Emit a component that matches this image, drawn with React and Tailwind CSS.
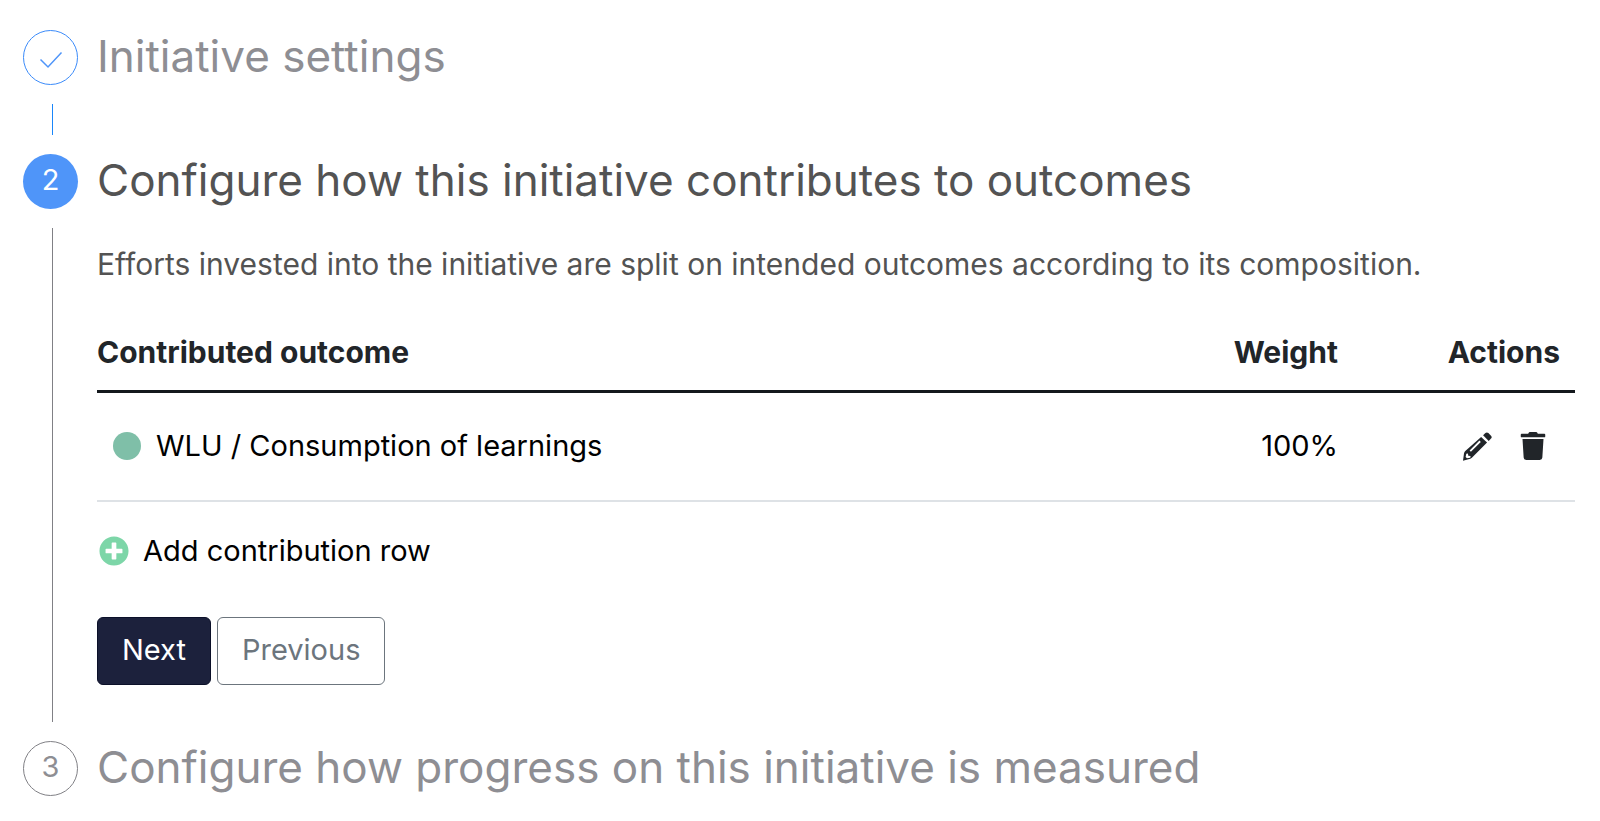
import { FaPlusCircle, FaTrash } from "react-icons/fa";

const contributions = [
  { id: 1, outcome: "WLU / Consumption of learnings", weight: 100 },
];

const badgeStyles = {
  done: "border border-[#3b8bfa] text-[#4f95f9]",
  active: "bg-[#4f95f9] text-white",
  waiting: "border border-[#808085] text-[#8e8e93]",
};

const PencilIcon = () => (
  <svg width="29" height="29" viewBox="0 0 88 88" fill="currentColor">
    <path d="M61 10L68 3Q72 0 77 3L85 11Q89 16 85 20L78 27Z" />
    <path
      fillRule="evenodd"
      d="M55 15L73 32L27 78Q25 80 22 81L0 87L3 65Q4 61 7 58ZM50 26L20 56L24 60L54 30ZM10 66L8 76L12 80L22 78L23 73L16 72L15 65Z"
    />
  </svg>
);

const Step = ({ number, status, title, children, last }) => (
  <li className="flex gap-[19px]">
    {/* Badge and connecting line */}
    <div className="flex w-[55px] shrink-0 flex-col">
      <div
        className={`flex h-[55px] w-[55px] items-center justify-center rounded-full pb-1 text-[29px] leading-9 ${badgeStyles[status]}`}
      >
        {status === "done" ? (
          <svg className="mt-2" width="24" height="18" viewBox="0 0 24 18" fill="none" stroke="currentColor" strokeWidth="1.5">
            <path d="M1.5 8.5L9 16L22.500 1.500" />
          </svg>
        ) : (
          number
        )}
      </div>
      {!last && (
        <div className={`my-[19px] ml-[29px] w-px flex-1 ${status === "done" ? "bg-[#1a86fa]" : "bg-[#808085]"}`}></div>
      )}
    </div>

    <div className={`min-w-0 flex-1 ${last ? "" : "pb-14"}`}>
      <h2 className={`text-[44px] leading-[52px] ${status === "active" ? "text-[#535353]" : "text-[#8e8e93]"}`}>
        {title}
      </h2>
      {children}
    </div>
  </li>
);

const ContributionTable = () => (
  <table className="mt-[52px] w-full text-[29px] leading-9">
    <thead>
      <tr className="border-b-[3px] border-[#14181d] text-[30px] text-[#212529]">
        <th className="pb-5 text-left font-bold">Contributed outcome</th>
        <th className="pb-5 text-right font-bold">Weight</th>
        <th className="w-[237px] pr-[15px] pb-5 text-right font-bold">Actions</th>
      </tr>
    </thead>
    <tbody>
      {contributions.map((row) => (
        <tr key={row.id} className="border-b-2 border-[#dee2e6] text-black">
          <td className="pt-[35px] pb-9 pl-4">
            <div className="flex items-center gap-[15px]">
              <span className="h-7 w-7 rounded-full bg-[#7fbfa8]"></span>
              {row.outcome}
            </div>
          </td>
          <td className="pt-[35px] pb-9 text-right">{row.weight}%</td>
          <td className="pt-[35px] pb-9 pr-7">
            <div className="flex items-center justify-end gap-[27px] text-[#212529]">
              <button aria-label="Edit">
                <PencilIcon />
              </button>
              <button aria-label="Delete">
                <FaTrash size={28} />
              </button>
            </div>
          </td>
        </tr>
      ))}
    </tbody>
  </table>
);

export default function App() {
  return (
    <main className="bg-white pt-[30px] pr-[25px] pb-6 pl-[23px] font-['Inter',sans-serif]">
      <ol>
        <Step number={1} status="done" title="Initiative settings">
          <div className="h-4"></div>
        </Step>

        <Step number={2} status="active" title="Configure how this initiative contributes to outcomes">
          <p className="mt-10 text-[30px] leading-9 text-[#535353]">
            Efforts invested into the initiative are split on intended outcomes according to its composition.
          </p>

          <ContributionTable />

          <button className="mt-[31px] flex items-center gap-[14px] pl-[2px] text-[29px] leading-9 text-black">
            <FaPlusCircle size={30} className="text-[#7dd6a8]" />
            Add contribution row
          </button>

          <div className="mt-12 flex gap-[6px] text-[29px] leading-9">
            <button className="h-[68px] rounded-md border border-[#0b1029] bg-[#1c213c] px-6 pb-[2px] text-white">
              Next
            </button>
            <button className="h-[68px] rounded-md border border-[#6c757d] bg-white px-6 pb-[2px] text-[#6c757d]">
              Previous
            </button>
          </div>
        </Step>

        <Step number={3} status="waiting" title="Configure how progress on this initiative is measured" last />
      </ol>
    </main>
  );
}
